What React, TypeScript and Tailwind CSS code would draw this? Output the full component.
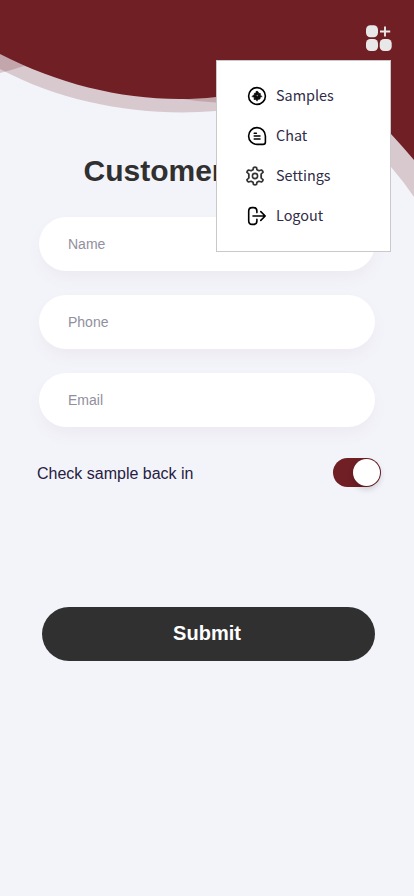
import React from "react";

const fields = ["Name", "Phone", "Email"];

function HeaderWave() {
  return (
    <svg className="absolute inset-x-0 top-0 h-[210px] w-full" viewBox="0 0 414 210" preserveAspectRatio="none" aria-hidden="true">
      <path d="M0 0H414V197Q404 182 391 167L340 104Q260 110 216 111C145 117 65 104 0 69Z" fill="#701f25" fillOpacity=".2" />
      <path d="M0 73Q12 70 24 66L183 99Q200 102 216 102.5L240 60L100 40H0Z" fill="#701f25" fillOpacity=".2" />
      <path d="M0 0H414V160Q403 147 391 134L340 76Q270 95 216 97C145 105 68 89 0 54Z" fill="#701f25" />
    </svg>
  );
}

function GridPlusIcon() {
  return (
    <svg width="26" height="27" viewBox="0 0 26 27" fill="#e8e8e8" aria-hidden="true">
      <rect x="0" y="0.2" width="12" height="12" rx="4.4" />
      <rect x="0" y="14" width="12" height="12" rx="4.4" />
      <rect x="13.7" y="14" width="12" height="12" rx="4.4" />
      <path d="M19 1.4V11.6M14 6.5H24.2" fill="none" stroke="#e8e8e8" strokeWidth="1.9" />
    </svg>
  );
}

function SamplesIcon() {
  return (
    <svg width="20" height="20" viewBox="0 0 20 20" fill="none" stroke="#000" aria-hidden="true">
      <circle cx="10" cy="10" r="8.4" strokeWidth="1.6" />
      <path d="M9 5.5l2 .2 .6 1.5 1.8.4-.2 1.8 1.3.7-1.3 1-.2 1.9-2 .3-.8 1.3-1.4-1-1.8-.2.3-1.8L5.5 10l1.7-1 .2-1.7 1.8-.2Z" fill="#111" strokeWidth=".7" />
      <path d="M4.7 10.7H15.3M10 4.9V15.3" strokeWidth=".7" />
      <circle cx="10.3" cy="9.6" r=".8" fill="#888" stroke="none" />
    </svg>
  );
}

function ChatIcon() {
  return (
    <svg width="20" height="20" viewBox="0 0 20 20" fill="none" stroke="#000" strokeWidth="1.6" strokeLinecap="round" aria-hidden="true">
      <path d="M10 1.6A8.4 8.4 0 0 1 18.4 10V16Q18.4 18.4 16 18.4H10A8.4 8.4 0 0 1 10 1.6Z" />
      <path d="M7.2 7.2H9.4M7.2 10.1H13M7.2 13H13" strokeWidth="1.5" />
    </svg>
  );
}

function SettingsIcon() {
  return (
    <svg width="20" height="20" viewBox="0 0 20 20" fill="none" stroke="#333" strokeWidth="1.6" strokeLinejoin="round" aria-hidden="true">
      <path d="M8.7 1.4Q10 .8 11.3 1.4L11.8 3.8L13.5 4.8L15.8 4Q17 4.8 17.2 6.2L15.5 8V12L17.2 13.8Q17 15.2 15.8 16L13.5 15.2L11.8 16.2L11.3 18.6Q10 19.2 8.7 18.6L8.2 16.2L6.5 15.2L4.2 16Q3 15.2 2.8 13.8L4.5 12V8L2.8 6.2Q3 4.8 4.2 4L6.5 4.8L8.2 3.8Z" transform="translate(-1.2 0) scale(1.12 1)" />
      <circle cx="10" cy="10" r="2.6" />
    </svg>
  );
}

function LogoutIcon() {
  return (
    <svg width="20" height="20" viewBox="0 0 20 20" fill="none" stroke="#000" strokeWidth="1.6" strokeLinecap="round" strokeLinejoin="round" aria-hidden="true">
      <path d="M9.9 6.6V5.2Q9.9 1.6 6.8 1.6H5Q1.7 1.6 1.7 5.2V14.8Q1.7 18.4 5 18.4H6.8Q9.9 18.4 9.9 14.8V13.4" />
      <path d="M6 10H18.2M13.8 5.6L18.2 10L13.8 14.4" />
    </svg>
  );
}

const menuItems = [
  { label: "Samples", icon: <SamplesIcon />, shift: "pl-[30px] gap-[9px]" },
  { label: "Chat", icon: <ChatIcon />, shift: "pl-[30px] gap-[9px]" },
  { label: "Settings", icon: <SettingsIcon />, shift: "pl-[28px] gap-[11px]" },
  { label: "Logout", icon: <LogoutIcon />, shift: "pl-[30px] gap-[9px]" },
];

function Menu() {
  return (
    <nav className="absolute left-[216px] top-[60px] z-10 h-[192px] w-[175px] border border-[#c9c9cb] bg-white pt-[15px]">
      {menuItems.map((item) => (
        <a key={item.label} className={`flex h-10 items-center font-['Noto_Sans_CJK_SC',sans-serif] text-[14.4px] leading-5 text-[#302b48] ${item.shift}`}>
          {item.icon}
          <span className="pb-0.5">{item.label}</span>
        </a>
      ))}
    </nav>
  );
}

export default function App() {
  return (
    <main className="relative h-[896px] w-full overflow-hidden bg-[#f3f4fa] font-['Liberation_Sans',Arial,sans-serif]">
      <HeaderWave />
      <header className="relative flex h-[150px] justify-end pr-[22px] pt-[25px]">
        <button className="h-[27px]" aria-label="Menu"><GridPlusIcon /></button>
      </header>
      <Menu />
      <h1 className="relative ml-[83.5px] h-[67px] text-[30px] font-bold leading-[41px] text-[#303030]">Customer</h1>
      <form className="relative">
        <div className="ml-[39px] flex w-[336px] flex-col gap-6">
          {fields.map((name) => (
            <input
              key={name}
              placeholder={name}
              className="h-[54px] rounded-full bg-white px-[29px] text-sm shadow-[0_8px_16px_rgba(112,31,37,0.04)] placeholder:text-[#918f9e]"
            />
          ))}
        </div>
        <div className="mt-[31px] flex h-[29px] items-center justify-between pl-[37px] pr-[33px]">
          <span className="pt-0.5 text-base leading-5 text-[#26203f]">Check sample back in</span>
          <div className="flex h-[29px] w-12 items-center justify-end rounded-full bg-[#701f25] pr-px">
            <span className="size-[27px] rounded-full bg-white shadow-[0_3px_6px_rgba(0,0,0,0.18)]" />
          </div>
        </div>
        <button type="button" className="ml-[42px] mt-[120px] h-[54px] w-[333px] rounded-full bg-[#303030] pb-[3px] pr-[3px] text-xl font-bold text-white">
          Submit
        </button>
      </form>
    </main>
  );
}
